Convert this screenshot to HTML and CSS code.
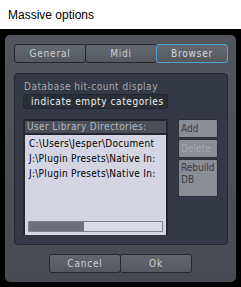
FILE: index.html
```html
<!DOCTYPE html>
<html>
	<head>
		<meta charset="UTF-8">
		<title>Massive options</title>
		<link rel="stylesheet" href="styles.css">
	</head>
	<body>
		<div class="titlebar">Massive options</div>
		<div class="frame">
			<div class="panel">
				<ul class="tabs">
					<li>General</li>
					<li>Midi</li>
					<li class="active">Browser</li>
				</ul>
				<div class="content">
					<div class="label">Database hit-count display</div>
					<div class="select">indicate empty categories</div>
					<div class="row">
						<div class="list">
							<div class="listHead">User Library Directories:</div>
							<ul class="items">
								<li>C:\Users\Jesper\Document</li>
								<li>J:\Plugin Presets\Native In:</li>
								<li>J:\Plugin Presets\Native In:</li>
							</ul>
							<div class="scroll"><div class="thumb"></div></div>
						</div>
						<div class="side">
							<button class="btn">Add</button>
							<button class="btn off">Delete</button>
							<button class="btn tall">Rebuild DB</button>
						</div>
					</div>
				</div>
				<div class="bottom">
					<button class="foot">Cancel</button>
					<button class="foot">Ok</button>
				</div>
			</div>
		</div>
	</body>
</html>
```

FILE: styles.css
```css
body, div, ul{
	margin: 0;
	padding: 0;
}
li{
	list-style: none;
}
button{
	border: none;
	outline: none;
	font-family: "DejaVu Sans", sans-serif;
	font-stretch: condensed;
}
html,body{
	width: 100%;
	height: 100%;
	background: #000;
	overflow: hidden;
}
.titlebar{
	height: 29px;
	line-height: 30px;
	background: #FFF;
	padding-left: 8px;
	font-family: "Liberation Sans", Arial, sans-serif;
	font-size: 12px;
	color: #000;
}
.frame{
	padding: 6px 5px 5px 5px;
}
.panel{
	height: 247px;
	background: linear-gradient(#52565c, #474a50);
	border-radius: 5px;
	padding: 9px 9px 0 9px;
	box-sizing: border-box;
	display: flex;
	flex-direction: column;
	font-family: "DejaVu Sans", sans-serif;
	font-stretch: condensed;
}
.tabs{
	display: flex;
	width: 213px;
	height: 19px;
}
.tabs li{
	flex: 1;
	height: 19px;
	line-height: 18px;
	text-align: center;
	font-size: 10px;
	letter-spacing: 0.8px;
	color: #CDD0D3;
	background: linear-gradient(#646870, #55595f);
	border: solid 1px #25272b;
	box-sizing: border-box;
	border-radius: 3px;
	margin-right: -1px;
}
.tabs li.active{
	border-color: #4FA6D6;
	color: #D8DADD;
}
.content{
	margin-top: 10px;
	width: 214px;
	height: 172px;
	background: #343945;
	border: solid 1px #24272d;
	border-radius: 4px;
	box-sizing: border-box;
	padding: 6px 0 0 8px;
}
.label{
	font-size: 10px;
	letter-spacing: 0.5px;
	color: #A6AAB0;
	padding-left: 1px;
	height: 13px;
	line-height: 13px;
}
.select{
	margin-top: 1px;
	width: 145px;
	height: 15px;
	line-height: 14px;
	background: #2A2E36;
	border: solid 1px #23262c;
	border-radius: 3px;
	box-sizing: border-box;
	padding-left: 7px;
	font-size: 10px;
	letter-spacing: 0.6px;
	color: #F0F0F0;
	white-space: nowrap;
}
.row{
	display: flex;
	margin-top: 10px;
}
.list{
	width: 145px;
	height: 116px;
	background: #23262c;
	border-radius: 3px;
	padding: 2px;
	box-sizing: border-box;
	overflow: hidden;
}
.listHead{
	height: 12px;
	line-height: 12px;
	background: #4B4F57;
	color: #B4B8C0;
	font-size: 10px;
	letter-spacing: 0.4px;
	padding-left: 2px;
	white-space: nowrap;
}
.items{
	margin-top: 2px;
	height: 84px;
	background: #D4D4E3;
	padding-top: 1px;
	overflow: hidden;
}
.items li{
	height: 15px;
	line-height: 15px;
	font-size: 10px;
	letter-spacing: 0.3px;
	color: #000;
	padding-left: 4px;
	white-space: nowrap;
	overflow: hidden;
}
.scroll{
	height: 14px;
	background: #D4D4E3;
	padding: 1px 3px 0 3px;
}
.scroll .thumb{
	height: 11px;
	border: solid 1px #7C7F88;
	box-sizing: border-box;
	background: linear-gradient(90deg, #6C7079 55px, #DADAE8 55px);
	border-radius: 1px;
}
.side{
	margin-left: 10px;
	display: flex;
	flex-direction: column;
}
.btn{
	width: 40px;
	height: 19px;
	padding: 0 0 0 2px;
	margin-bottom: 1px;
	text-align: left;
	background: #8A8D94;
	border: solid 1px #2B2E35;
	border-radius: 2px;
	box-sizing: border-box;
	font-size: 10px;
	letter-spacing: 0;
	color: #383B42;
	white-space: normal;
}
.btn.off{
	color: #A6A9AF;
}
.btn.tall{
	height: 38px;
	line-height: 12px;
	padding-bottom: 8px;
	word-spacing: 20px;
}
.bottom{
	display: flex;
	justify-content: center;
	margin-top: 9px;
	padding-right: 1px;
}
.foot{
	width: 72px;
	height: 19px;
	background: linear-gradient(#63676e, #55595f);
	border: solid 1px #25272b;
	border-radius: 3px;
	margin-right: -1px;
	box-sizing: border-box;
	font-size: 10px;
	letter-spacing: 0.8px;
	color: #CDD0D3;
}
```
